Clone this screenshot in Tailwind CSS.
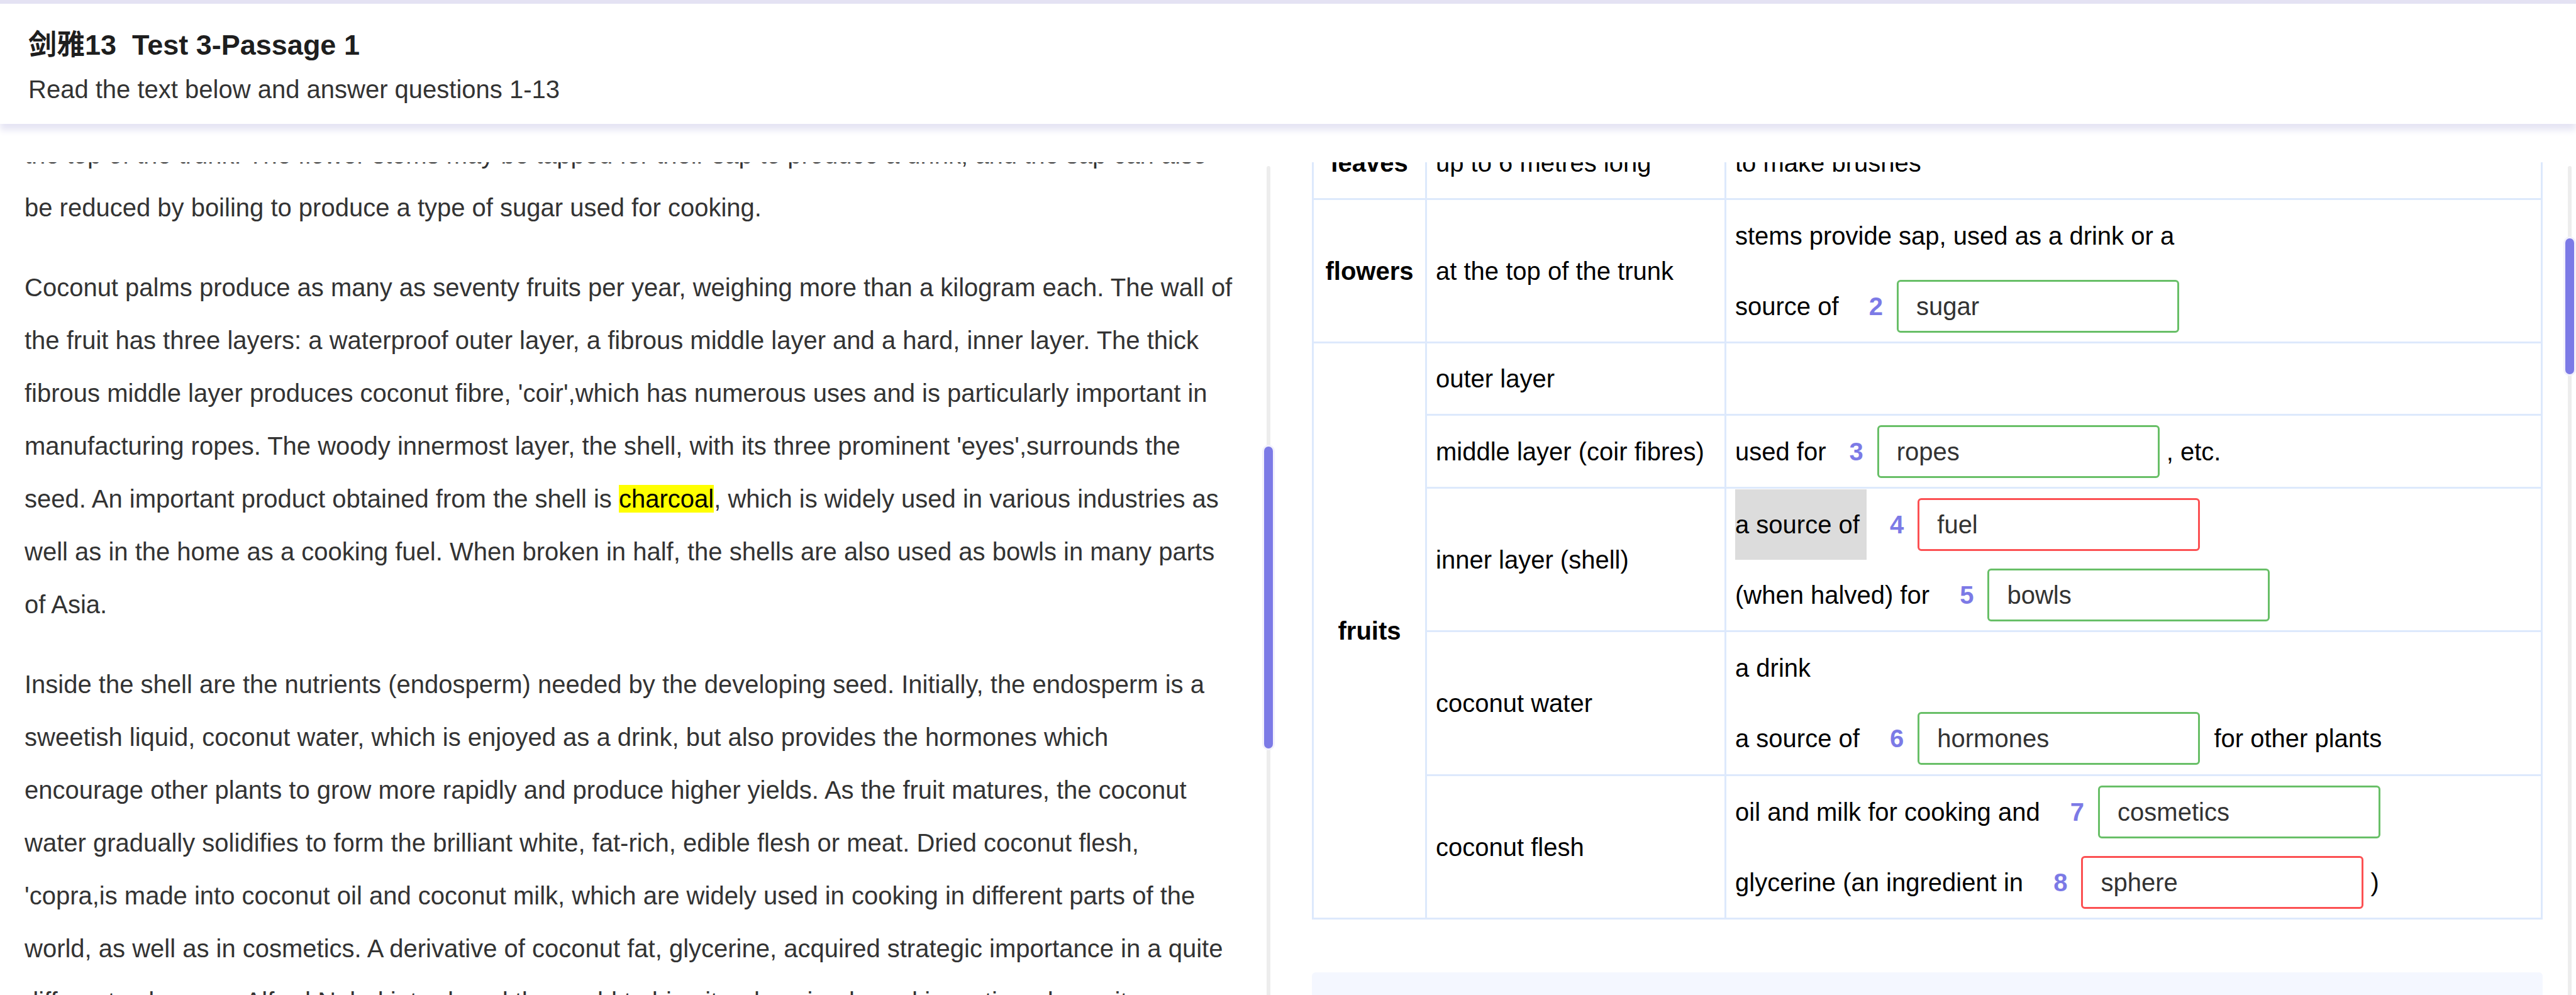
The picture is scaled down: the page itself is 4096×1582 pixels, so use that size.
<!DOCTYPE html>
<html lang="en">
<head>
<meta charset="utf-8">
<title>剑雅13 Test 3-Passage 1</title>
<script src="https://cdn.jsdelivr.net/npm/@tailwindcss/browser@4"></script>
</head>
<body class="bg-white">
<div class="flex h-screen flex-col overflow-hidden font-['Liberation_Sans','Noto_Sans_CJK_SC',sans-serif] text-[40px] text-[#333]">

  <header class="relative z-10 shrink-0 border-t-6 border-[#e4e2f3] bg-white px-[45px] pt-[38px] pb-[27px] shadow-[0_10px_10px_#e6e5f4]">
    <h1 class="text-[45px] leading-14 font-bold text-[#1e1e1e]">剑雅13&nbsp; Test 3-Passage 1</h1>
    <p class="mt-[14px] leading-14">Read the text below and answer questions 1-13</p>
  </header>

  <main class="flex min-h-0 flex-1 pt-[61px]">

    <!-- Reading passage -->
    <section class="flex w-1/2 pr-6 pl-[39px]" aria-label="Passage">
      <div class="min-w-0 flex-1 overflow-hidden">
        <article class="-mt-[54px] space-y-[43px] leading-[84px] whitespace-nowrap">
          <p>the top of the trunk. The flower stems may be tapped for their sap to produce a drink, and the sap can also<br>
          be reduced by boiling to produce a type of sugar used for cooking.</p>
          <p>Coconut palms produce as many as seventy fruits per year, weighing more than a kilogram each. The wall of<br>
          the fruit has three layers: a waterproof outer layer, a fibrous middle layer and a hard, inner layer. The thick<br>
          fibrous middle layer produces coconut fibre, 'coir',which has numerous uses and is particularly important in<br>
          manufacturing ropes. The woody innermost layer, the shell, with its three prominent 'eyes',surrounds the<br>
          seed. An important product obtained from the shell is <mark class="bg-[#ff0] text-black">charcoal</mark>, which is widely used in various industries as<br>
          well as in the home as a cooking fuel. When broken in half, the shells are also used as bowls in many parts<br>
          of Asia.</p>
          <p>Inside the shell are the nutrients (endosperm) needed by the developing seed. Initially, the endosperm is a<br>
          sweetish liquid, coconut water, which is enjoyed as a drink, but also provides the hormones which<br>
          encourage other plants to grow more rapidly and produce higher yields. As the fruit matures, the coconut<br>
          water gradually solidifies to form the brilliant white, fat-rich, edible flesh or meat. Dried coconut flesh,<br>
          'copra,is made into coconut oil and coconut milk, which are widely used in cooking in different parts of the<br>
          world, as well as in cosmetics. A derivative of coconut fat, glycerine, acquired strategic importance in a quite<br>
          different sphere, as Alfred Nobel introduced the world to his nitroglycerine-based invention: dynamite.</p>
        </article>
      </div>
      <div class="relative mt-[6px] flex w-[14px] justify-center">
        <div class="w-[6px] rounded-t-full bg-[#ededed]"></div>
        <div class="absolute inset-x-0 top-[446px] h-[480px] rounded-full bg-[#7c7ae6] ring-3 ring-[#f2f1fc]"></div>
      </div>
    </section>

    <!-- Questions -->
    <section class="flex w-1/2 gap-9 pr-[3px] pl-[38px]" aria-label="Questions">
      <div class="min-w-0 flex-1 overflow-hidden">
        <table class="-mt-[58px] w-full table-fixed border-collapse text-left leading-[112px] text-black [&_td]:border-3 [&_td]:border-[#dde9fc] [&_td]:px-[14px] [&_th]:border-3 [&_th]:border-[#dde9fc] [&_th]:text-center [&_label]:ml-[37px] [&_label]:mr-[22px] [&_label]:font-bold [&_label]:text-[#7c7ae6] [&_input]:mr-[11px] [&_input]:h-[84px] [&_input]:w-[449px] [&_input]:rounded-[6px] [&_input]:border-3 [&_input]:px-7 [&_input]:text-[#333]">
          <colgroup><col class="w-[180px]"><col class="w-[476px]"><col></colgroup>
          <tbody>
            <tr class="h-[115px]">
              <th scope="row">leaves</th>
              <td>up to 6 metres long</td>
              <td>to make brushes</td>
            </tr>
            <tr class="h-[228px]">
              <th scope="row">flowers</th>
              <td>at the top of the trunk</td>
              <td>
                <div>stems provide sap, used as a drink or a</div>
                <div class="flex h-[112px] items-center whitespace-pre"><span>source of </span><label for="q2">2</label><input id="q2" type="text" value="sugar" class="border-[#68bf67]"></div>
              </td>
            </tr>
            <tr class="h-[115px]">
              <th scope="row" rowspan="5">fruits</th>
              <td>outer layer</td>
              <td></td>
            </tr>
            <tr class="h-[116px]">
              <td>middle layer (coir fibres)</td>
              <td>
                <div class="flex h-[112px] items-center whitespace-pre"><span>used for</span><label for="q3">3</label><input id="q3" type="text" value="ropes" class="border-[#68bf67]"><span>, etc.</span></div>
              </td>
            </tr>
            <tr class="h-[228px]">
              <td>inner layer (shell)</td>
              <td>
                <div class="flex h-[112px] items-center whitespace-pre"><span class="bg-[#dcdcdc]">a source of </span><label for="q4">4</label><input id="q4" type="text" value="fuel" class="border-[#fc5052]"></div>
                <div class="flex h-[112px] items-center whitespace-pre"><span>(when halved) for </span><label for="q5">5</label><input id="q5" type="text" value="bowls" class="border-[#68bf67]"></div>
              </td>
            </tr>
            <tr class="h-[229px]">
              <td>coconut water</td>
              <td>
                <div>a drink</div>
                <div class="flex h-[112px] items-center whitespace-pre"><span>a source of </span><label for="q6">6</label><input id="q6" type="text" value="hormones" class="border-[#68bf67]"><span> for other plants</span></div>
              </td>
            </tr>
            <tr class="h-[228px]">
              <td>coconut flesh</td>
              <td>
                <div class="flex h-[112px] items-center whitespace-pre"><span>oil and milk for cooking and </span><label for="q7">7</label><input id="q7" type="text" value="cosmetics" class="border-[#68bf67]"></div>
                <div class="flex h-[112px] items-center whitespace-pre"><span>glycerine (an ingredient in </span><label for="q8">8</label><input id="q8" type="text" value="sphere" class="border-[#fc5052]"><span>)</span></div>
              </td>
            </tr>
          </tbody>
        </table>
        <div class="mt-[84px] h-40 rounded-[6px] bg-[#f4f7ff]"></div>
      </div>
      <div class="relative mt-[6px] flex w-[14px] justify-center">
        <div class="w-[6px] rounded-t-full bg-[#ededed]"></div>
        <div class="absolute inset-x-0 top-[115px] h-[216px] rounded-full bg-[#7c7ae6] ring-3 ring-[#f2f1fc]"></div>
      </div>
    </section>

  </main>
</div>
</body>
</html>
